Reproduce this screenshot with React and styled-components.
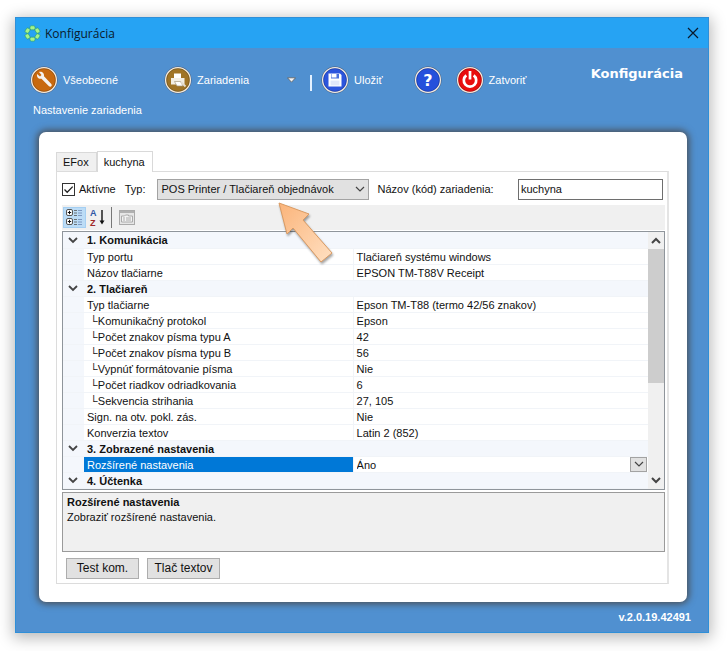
import React, { useState } from 'react';
import styled, { createGlobalStyle, css } from 'styled-components';


const GlobalStyle = createGlobalStyle`
  *, *::before, *::after {
    box-sizing: border-box;
  }
  body {
    margin: 0;
    background: #fff;
    color: #111;
    font-family: "Liberation Sans", Arial, sans-serif;
    font-size: 11px;
  }
  button, input, select {
    font: inherit;
    color: inherit;
  }
`

const Desktop = styled.div`
  min-height: 100vh;
  padding: 17px 19px 18px 15px;
`

const Window = styled.main`
  border: 1px solid #2f8fd8;
  background: #5090d0;
  box-shadow: 0 3px 14px 2px rgba(0, 0, 0, 0.28);
`

const TitleBar = styled.header`
  display: flex;
  align-items: center;
  height: 30px;
  padding: 0 7px 0 8px;
  background: #26a3f3;
`

const WindowTitle = styled.h1`
  flex: 1;
  margin: 0 0 0 4px;
  font-family: "Open Sans", "Noto Sans", sans-serif;
  font-size: 12px;
  font-weight: 400;
  color: #0a1a2c;
`

const CloseButton = styled.button`
  display: flex;
  padding: 2px;
  border: 0;
  background: none;
`

const Toolbar = styled.nav`
  display: flex;
  align-items: center;
  height: 32px;
  margin-top: 16px;
  padding: 0 25px 0 14px;
  color: #fff;
`

const ToolButton = styled.button`
  display: flex;
  flex-shrink: 0;
  align-items: center;
  gap: 5px;
  padding: 0;
  border: 0;
  background: none;
  margin-right: ${({ $space }) => $space || 0}px;
`

const Divider = styled.span`
  width: 2px;
  height: 16px;
  margin: 6px 9px 0 14px;
  background: #e4f1ff;
`

const SectionTitle = styled.h2`
  flex: 1;
  margin: 0;
  align-self: flex-start;
  text-align: right;
  font-family: "DejaVu Sans", Verdana, sans-serif;
  font-size: 13px;
  line-height: 20px;
  font-weight: 700;
`

const Subtitle = styled.p`
  margin: 7px 17px 0;
  font-size: 11px;
  line-height: 14px;
  color: #fff;
`

const Panel = styled.section`
  margin: 15px 21px 0 23px;
  padding: 19px 18px 18px 17px;
  border-radius: 7px;
  background: #fff;
  box-shadow: 0 0 7px 2px #4a4f56;
`

const Tabs = styled.div`
  display: flex;
  align-items: flex-end;
`

const Tab = styled.button`
  height: ${({ $active }) => ($active ? 21 : 19)}px;
  padding: 0 7px 0 6px;
  border: 1px solid #d9d9d9;
  border-bottom: 0;
  background: ${({ $active }) => ($active ? '#fff' : '#f0f0f0')};
  margin-bottom: ${({ $active }) => ($active ? -1 : 0)}px;
  z-index: ${({ $active }) => ($active ? 1 : 0)};
`

const TabPage = styled.div`
  padding: 6px 2px 4px 5px;
  border: 1px solid #dcdcdc;
  border-right: 2px solid #e4e4e4;
`

const Fields = styled.div`
  display: flex;
  align-items: center;
  height: 22px;
  padding-right: 2px;
`

const CheckLabel = styled.label`
  display: flex;
  align-items: center;
  gap: 4px;
  margin-right: 9px;
`

const CheckBox = styled.input`
  appearance: none;
  width: 13px;
  height: 13px;
  margin: 0;
  border: 1px solid #333;
  background: #fff;
  &:checked {
    background: #fff url("data:image/svg+xml,%3Csvg xmlns='http://www.w3.org/2000/svg' viewBox='0 0 11 11'%3E%3Cpath d='M1.5 5.5l2.7 2.8L9.7 2.6' fill='none' stroke='%23222' stroke-width='1.3'/%3E%3C/svg%3E") center / 11px no-repeat;
  }
`

const FieldLabel = styled.label`
  margin-right: 12px;
  white-space: nowrap;
`

const NameField = styled.div`
  display: flex;
  flex: 1;
  align-items: center;
  justify-content: space-between;
  margin-left: 8px;
`

const SelectBox = styled.div`
  position: relative;
  display: grid;
  align-items: center;
  width: ${({ $width }) => $width};
  > * {
    grid-area: 1 / 1;
  }
  > svg {
    justify-self: end;
    margin-right: 4px;
    pointer-events: none;
  }
`

const Select = styled.select`
  appearance: none;
  width: 100%;
  height: 21px;
  padding: 0 20px 0 3px;
  border: 1px solid #a3a3a3;
  border-radius: 0;
  background: #e1e1e1;
`

const Pointer = styled.svg`
  && {
    position: absolute;
    top: 21px;
    left: 119px;
    z-index: 2;
    margin: 0;
    filter: drop-shadow(1px 2px 1px rgba(0, 0, 0, 0.35));
  }
`

const TextInput = styled.input`
  width: 145px;
  height: 21px;
  padding: 0 2px;
  border: 1px solid #6e6e6e;
  background: #fff;
`

const GridToolbar = styled.div`
  display: flex;
  align-items: center;
  height: 25px;
  margin-top: 5px;
  padding-left: 1px;
  background: #f0f0f0;
`

const GridButton = styled.button`
  display: flex;
  align-items: center;
  justify-content: center;
  width: 23px;
  height: 21px;
  padding: 0;
  border: 1px solid ${({ $active }) => ($active ? '#a5cff2' : 'transparent')};
  background: ${({ $active }) => ($active ? '#bcdcf6' : 'none')};
`

const GridDivider = styled.span`
  width: 1px;
  height: 21px;
  margin: 0 3px 0 2px;
  background: #777;
`

const PropertyBox = styled.div`
  display: flex;
  margin-top: 1px;
  border: 1px solid #8f959b;
  background: #fff;
`

const PropertyTable = styled.table`
  flex: 1;
  border-collapse: collapse;
  table-layout: fixed;
  font-size: 11px;
`

const Row = styled.tr`
  height: 16px;
  td, th {
    height: 16px;
    padding: 2px 0 0 3px;
    line-height: 13px;
    text-align: left;
    font-weight: 400;
    white-space: pre;
    border-bottom: 1px solid #f1f4f8;
  }
  td:first-child {
    padding: 0 0 0 5px;
    background: #f4f7fc;
  }
  td:last-child {
    border-left: 1px solid #f1f4f8;
  }
  ${({ $group }) => $group && css`
    background: #f4f7fc;
    && th {
      font-weight: 700;
    }
  `}
  ${({ $selected }) => $selected && css`
    th {
      background: #0078d7;
      color: #fff;
    }
    td:last-child {
      padding-top: 0;
    }
  `}
`

const ToggleButton = styled.button`
  display: flex;
  padding: 0;
  border: 0;
  background: none;
`

const ValueSelect = styled(Select)`
  height: 15px;
  padding: 2px 0 0;
  border: 0;
  background: #fff;
`

const DropMark = styled.span`
  display: flex;
  align-items: center;
  justify-content: center;
  justify-self: end;
  width: 17px;
  height: 15px;
  margin-right: 1px;
  border: 1px solid #a3a3a3;
  background: #e1e1e1;
  pointer-events: none;
`

const ScrollBar = styled.div`
  display: flex;
  flex-direction: column;
  width: 16px;
  background: #f0f0f0;
`

const ScrollButton = styled.button`
  display: flex;
  align-items: center;
  justify-content: center;
  height: 17px;
  padding: 0;
  border: 0;
  background: none;
`

const ScrollTrack = styled.div`
  flex: 1;
`

const ScrollThumb = styled.div`
  height: 60%;
  background: #cdcdcd;
`

const Description = styled.div`
  min-height: 60px;
  margin-top: 2px;
  padding: 2px 4px;
  border: 1px solid #9a9a9a;
  background: #f0f0f0;
  font-size: 11px;
  line-height: 15px;
  h3, p {
    margin: 0;
    font-size: 11px;
  }
`

const Actions = styled.div`
  display: flex;
  gap: 8px;
  margin: 6px 4px 0;
`

const ActionButton = styled.button`
  width: 73px;
  height: 21px;
  padding: 0;
  border: 1px solid #adadad;
  background: #e1e1e1;
  font-size: 12px;
`

const Version = styled.footer`
  padding: 8px 17px;
  text-align: right;
  font-size: 11px;
  line-height: 14px;
  font-weight: 700;
  color: #fff;
`


const AppLogo = () => (
  <svg width="17" height="17" viewBox="0 0 17 17">
    {[0, 60, 120, 180, 240, 300].map((angle) => (
      <rect key={angle} x="6" y="0.8" width="5" height="4" rx="1.4" fill="#a4f48c"
            stroke="#2a9a6a" strokeWidth="0.6" transform={`rotate(${angle} 8.5 8.5)`} />
    ))}
  </svg>
)

const RoundIcon = ({ color, children }) => (
  <svg width="28" height="28" viewBox="0 0 28 28">
    <circle cx="14" cy="14" r="13.5" fill="#4a5a78" />
    <circle cx="14" cy="14" r="12.4" fill={color} stroke="#f3ece0" strokeWidth="1.3" />
    <circle cx="14" cy="14" r="11.4" fill="none" stroke="#000" strokeOpacity="0.22" strokeWidth="0.9" />
    {children}
  </svg>
)

const Chevron = ({ size = 10, up, width = 1.2 }) => (
  <svg width={size} height={size} viewBox="0 0 10 10">
    <path d={up ? 'M1 7l4-4 4 4' : 'M1 3l4 4 4-4'} fill="none" stroke="#444" strokeWidth={width} />
  </svg>
)

const CategoryIcon = () => (
  <svg width="17" height="17" viewBox="0 0 17 17" fill="none">
    {[0.5, 9.5].map((y) => (
      <g key={y}>
        <rect x="0.5" y={y} width="6" height="6" rx="1.5" fill="#fff" stroke="#555" />
        <path d={`M1.8 ${y + 3}h3.4M3.5 ${y + 1.3}v3.4`} stroke="#111" />
        <path d={`M8 ${y + 1}h3M8 ${y + 3.5}h3M8 ${y + 6}h3`} stroke="#555" strokeWidth="0.8" />
        <path d={`M12 ${y + 1}h4M12 ${y + 3.5}h4M12 ${y + 6}h4`} stroke="#6d86b5" strokeWidth="0.8" />
      </g>
    ))}
  </svg>
)

const SortIcon = () => (
  <svg width="17" height="19" viewBox="0 0 17 19">
    <text x="1" y="8" fontFamily="Liberation Sans, sans-serif" fontSize="9" fontWeight="700" fill="#2d55a5">A</text>
    <text x="1" y="18" fontFamily="Liberation Sans, sans-serif" fontSize="9" fontWeight="700" fill="#a02828">Z</text>
    <path d="M13 2v12" stroke="#111" strokeWidth="1.4" />
    <path d="M10.5 12.5h5l-2.5 4z" fill="#111" />
  </svg>
)

const PagesIcon = () => (
  <svg width="16" height="15" viewBox="0 0 16 15" fill="none" stroke="#aaa">
    <rect x="0.5" y="0.5" width="15" height="14" fill="#e6e6e6" />
    <path d="M1 2h14" stroke="#b0b0b0" strokeWidth="2" />
    <path d="M2.5 12V6h3l1-1h3v1h4v6z" fill="#f3f3f3" />
    <path d="M4 8h2M7 8h5M4 10h2M7 10h5" />
  </svg>
)


const rows = [
  { group: '1. Komunikácia' },
  { name: 'Typ portu', value: 'Tlačiareň systému windows' },
  { name: 'Názov tlačiarne', value: 'EPSON TM-T88V Receipt' },
  { group: '2. Tlačiareň' },
  { name: 'Typ tlačiarne', value: 'Epson TM-T88 (termo 42/56 znakov)' },
  { name: ' └Komunikačný protokol', value: 'Epson' },
  { name: ' └Počet znakov písma typu A', value: '42' },
  { name: ' └Počet znakov písma typu B', value: '56' },
  { name: ' └Vypnúť formátovanie písma', value: 'Nie' },
  { name: ' └Počet riadkov odriadkovania', value: '6' },
  { name: ' └Sekvencia strihania', value: '27, 105' },
  { name: 'Sign. na otv. pokl. zás.', value: 'Nie' },
  { name: 'Konverzia textov', value: 'Latin 2 (852)' },
  { group: '3. Zobrazené nastavenia' },
  { name: 'Rozšírené nastavenia', value: 'Áno', selected: true },
  { group: '4. Účtenka' },
]


export default function App() {
  const [ tab, setTab ] = useState('kuchyna')
  const [ active, setActive ] = useState(true)
  const [ deviceName, setDeviceName ] = useState('kuchyna')

  return (
    <Desktop>
      <GlobalStyle />
      <Window>
        <TitleBar>
          <AppLogo />
          <WindowTitle>Konfigurácia</WindowTitle>
          <CloseButton aria-label="Zavrieť okno">
            <svg width="12" height="12" viewBox="0 0 12 12">
              <path d="M1 1l10 10M11 1L1 11" stroke="#0a1a2c" strokeWidth="1.2" />
            </svg>
          </CloseButton>
        </TitleBar>

        <Toolbar>
          <ToolButton $space={46}>
            <RoundIcon color="#c8690f">
              <path d="M7 8l3 2.500 1.500-1.500-2.500-3c3-.8 5.500 1.200 5 4.300l7.300 7.800c1.400 1.700-.7 3.600-2.300 2.200l-7.500-7.600c-2.800.8-5-1.500-4.500-4.700z" fill="#f5f3f0" />
            </RoundIcon>
            Všeobecné
          </ToolButton>
          <ToolButton $space={38}>
            <RoundIcon color="#a07426">
              <path d="M10 7.500h7v5h-7z" fill="#fff" />
              <path d="M7 12h13.500v6.500H7z" fill="#f3eee4" />
              <path d="M10.500 15.500h6l2.500 4.500h-6z" fill="#fff" stroke="#a89a80" strokeWidth="0.7" />
              <path d="M17 16l4.500 4.500" stroke="#e4ddd0" strokeWidth="1.8" />
            </RoundIcon>
            Zariadenia
          </ToolButton>
          <ToolButton aria-label="Ďalšie zariadenia">
            <svg width="9" height="6" viewBox="0 0 9 6">
              <path d="M0.5 0.8h8L4.5 5.2z" fill="#f4f4f4" stroke="#5d5d5d" strokeWidth="0.8" />
            </svg>
          </ToolButton>
          <Divider />
          <ToolButton $space={31}>
            <RoundIcon color="#2c55dd">
              <path d="M7.500 7.500h11.500l1.500 1.500v11.500h-13z" fill="#fff" />
              <path d="M10 8h8v4.500h-8z" fill="#4a70dd" />
              <path d="M10.500 8h5v3.500h-5z" fill="#fff" />
              <path d="M9.500 14.500h9v5h-9z" fill="#dfe6fa" />
            </RoundIcon>
            Uložiť
          </ToolButton>
          <ToolButton $space={14} aria-label="Pomocník">
            <RoundIcon color="#2450dc">
              <text x="14" y="20" textAnchor="middle" fontSize="16" fontWeight="700"
                    fontFamily="DejaVu Sans, sans-serif" fill="#fff">?</text>
            </RoundIcon>
          </ToolButton>
          <ToolButton>
            <RoundIcon color="#e90d0d">
              <path d="M10.300 9.400a6.200 6.200 0 1 0 7.400 0" fill="none" stroke="#fff" strokeWidth="2.7" />
              <path d="M14 5v8.500" stroke="#fff" strokeWidth="2.7" />
            </RoundIcon>
            Zatvoriť
          </ToolButton>
          <SectionTitle>Konfigurácia</SectionTitle>
        </Toolbar>
        <Subtitle>Nastavenie zariadenia</Subtitle>

        <Panel>
          <Tabs role="tablist">
            {['EFox', 'kuchyna'].map((name) => (
              <Tab key={name} role="tab" aria-selected={tab === name} $active={tab === name}
                   onClick={() => setTab(name)}>{name}</Tab>
            ))}
          </Tabs>
          <TabPage>
            <Fields>
              <CheckLabel>
                <CheckBox type="checkbox" checked={active} onChange={(e) => setActive(e.target.checked)} />
                Aktívne
              </CheckLabel>
              <FieldLabel htmlFor="type">Typ:</FieldLabel>
              <SelectBox $width="212px">
                <Select id="type">
                  <option>POS Printer / Tlačiareň objednávok</option>
                </Select>
                <Chevron />
                <Pointer width="58" height="64" viewBox="0 0 58 64">
                  <defs>
                    <linearGradient id="pointerFill" x1="0" y1="0" x2="1" y2="1">
                      <stop offset="0" stopColor="#fbb47a" />
                      <stop offset="1" stopColor="#ffe0c2" />
                    </linearGradient>
                  </defs>
                  <path d="M3 3l30 11-6 6 29 33-11 9-28-34-6 6z" fill="url(#pointerFill)"
                        stroke="#d99a62" strokeLinejoin="round" />
                </Pointer>
              </SelectBox>
              <NameField>
                <FieldLabel htmlFor="deviceName">Názov (kód) zariadenia:</FieldLabel>
                <TextInput id="deviceName" value={deviceName} onChange={(e) => setDeviceName(e.target.value)} />
              </NameField>
            </Fields>

            <GridToolbar>
              <GridButton $active aria-label="Podľa kategórie"><CategoryIcon /></GridButton>
              <GridButton aria-label="Podľa abecedy"><SortIcon /></GridButton>
              <GridDivider />
              <GridButton aria-label="Stránky vlastností"><PagesIcon /></GridButton>
            </GridToolbar>

            <PropertyBox>
              <PropertyTable>
                <colgroup>
                  <col width="21" />
                  <col width="46%" />
                  <col />
                </colgroup>
                <tbody>
                  {rows.map((row) => row.group ? (
                    <Row key={row.group} $group>
                      <td><ToggleButton aria-label={row.group}><Chevron width={1.8} /></ToggleButton></td>
                      <th colSpan="2">{row.group}</th>
                    </Row>
                  ) : (
                    <Row key={row.name} $selected={row.selected}>
                      <td></td>
                      <th scope="row">{row.name}</th>
                      <td>
                        {row.selected ? (
                          <SelectBox $width="100%">
                            <ValueSelect aria-label={row.name}>
                              <option>{row.value}</option>
                              <option>Nie</option>
                            </ValueSelect>
                            <DropMark><Chevron /></DropMark>
                          </SelectBox>
                        ) : row.value}
                      </td>
                    </Row>
                  ))}
                </tbody>
              </PropertyTable>
              <ScrollBar>
                <ScrollButton aria-label="Hore"><Chevron up width={2} /></ScrollButton>
                <ScrollTrack><ScrollThumb /></ScrollTrack>
                <ScrollButton aria-label="Dole"><Chevron width={2} /></ScrollButton>
              </ScrollBar>
            </PropertyBox>

            <Description>
              <h3>Rozšírené nastavenia</h3>
              <p>Zobraziť rozšírené nastavenia.</p>
            </Description>
            <Actions>
              <ActionButton>Test kom.</ActionButton>
              <ActionButton>Tlač textov</ActionButton>
            </Actions>
          </TabPage>
        </Panel>
        <Version>v.2.0.19.42491</Version>
      </Window>
    </Desktop>
  )
}
